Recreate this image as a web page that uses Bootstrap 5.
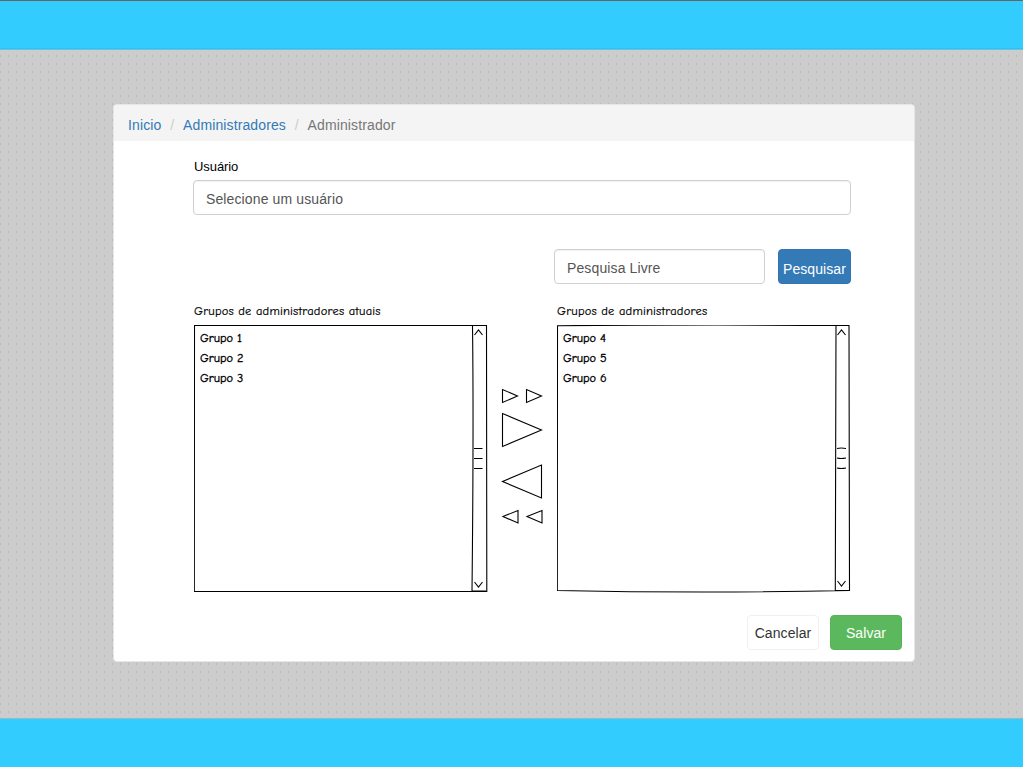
<!DOCTYPE html>
<html lang="pt-BR">
<head>
<meta charset="utf-8">
<meta name="viewport" content="width=device-width, initial-scale=1">
<title>Administrador</title>
<link href="https://cdn.jsdelivr.net/npm/bootstrap@5.3.0/dist/css/bootstrap.min.css" rel="stylesheet">
<style>
body{font-family:"Liberation Sans",Arial,sans-serif;font-size:14px;line-height:20px;color:#333;height:767px;overflow:hidden;background:#ccc}
.top-bar{height:50px;background:#3cf;border-top:1px solid #666;border-bottom:1px solid #6bc3e2;box-shadow:inset 0 -1px #2bc3f6}
.bottom-bar{height:49px;background:#3cf;border-top:1px solid #8bbdcd}
.dotted{background:#ccc url("data:image/svg+xml,%3Csvg xmlns='http://www.w3.org/2000/svg' width='8' height='8'%3E%3Cpath d='M0 5h1v2H0z' fill='%23bababa'/%3E%3C/svg%3E");padding:54px 0 0 113px}
.panel{width:802px;height:558px;border:1px solid #e6e6e6;border-radius:4px;overflow:hidden}
.trail{height:36px;background:#f4f4f4;padding:10px 0 0 14px;letter-spacing:.12px}
.trail .breadcrumb{--bs-breadcrumb-divider-color:#ccc;--bs-breadcrumb-item-active-color:#777;--bs-breadcrumb-item-padding-x:8.8px}
.trail a{color:#337ab7}
.content{padding:16px 12px 0 80px}
.field-label{font-size:13px;color:#000;line-height:19px;letter-spacing:-.08px}
.field{height:35px;border:1px solid #d0d0d0;border-radius:4px;padding:2px 12px 0;font-size:14px;color:#555;letter-spacing:.12px;box-shadow:inset 0 1px 1px rgba(0,0,0,.06)}
.field-user{width:658px;margin:4px 0 0 -1px}
.search-row{width:657px;margin-top:34px}
.field-search{width:211px}
.btn{font-size:14px;height:35px;border-radius:4px;padding:1px 0 0;letter-spacing:.08px;line-height:20px}
.btn-search{width:73px;background:#337ab7;border-color:#3075b1;padding-top:4px;margin-left:13px}
.btn-cancel{width:72px;border-color:#f0f0f0;color:#333;background:#fff}
.btn-save{width:72px;background:#5cb85c;border-color:#56b456}
.lists{margin-top:16px}
.hand{font-family:"Comic Sans MS","Comic Neue","Open Sans","Noto Sans",sans-serif;font-size:12px;color:#000}
.list-title{font-size:12.5px;line-height:22px;height:25px;white-space:nowrap;letter-spacing:.2px;-webkit-text-stroke:.2px #000}
.pick{width:294px;height:268px}
.pick svg{top:0;left:0}
.pick ul{padding:3px 0 0 6px}
.pick li{font-size:12.3px;line-height:20px;height:20px;-webkit-text-stroke:.35px #000}
.sketch{fill:none;stroke:#000;stroke-width:1.1}
.movers{width:69px;padding:86px 0 0 13px}
.actions{margin-top:22px;gap:11px}
</style>
</head>
<body class="d-flex flex-column">
<header class="top-bar flex-shrink-0"></header>
<main class="dotted flex-grow-1">
<section class="panel bg-white">
<nav class="trail"><ol class="breadcrumb mb-0">
<li class="breadcrumb-item"><a class="text-decoration-none" href="#">Inicio</a></li>
<li class="breadcrumb-item"><a class="text-decoration-none" href="#">Administradores</a></li>
<li class="breadcrumb-item active">Administrador</li></ol></nav>
<div class="content">
<div class="field-label">Usuário</div>
<div class="field field-user d-flex align-items-center">Selecione um usuário</div>
<div class="search-row d-flex justify-content-end align-items-start">
<div class="field field-search d-flex align-items-center">Pesquisa Livre</div>
<button class="btn btn-primary btn-search" type="button">Pesquisar</button>
</div>
<div class="lists d-flex hand">
<div><div class="list-title">Grupos de administradores atuais</div>
<div class="pick position-relative">
<svg class="position-absolute sketch" width="294" height="268"><path d="M.5.5H292.500L292.800 266.500.3 266.500ZM278.500 1Q279.800 100 278 266.500M280.500 10l4-5 4 5M280 123.500h8.500M280 133.500h8.500M280 143.500h8.500M280.500 257l4 5 4-5M278 266h14"/></svg>
<ul class="list-unstyled mb-0 position-relative"><li>Grupo 1</li><li>Grupo 2</li><li>Grupo 3</li></ul>
</div></div>
<div class="movers"><svg class="sketch" width="44" height="140" viewBox="0 0 44 140"><path d="M1.500 3.500v13l15-6.500zM25.500 3.500v13l15-6.500zM1.500 27.500v33l39-16.500zM40.500 79v33L1.500 95.500zM17 124.500v12.500l-15-6.500zM41 124.500v12.500l-15-6.500z"/></svg></div>
<div><div class="list-title">Grupos de administradores</div>
<div class="pick position-relative">
<svg class="position-absolute sketch" width="294" height="268"><path d="M.5.700Q147-.5 292 .5L292.500 265.500Q147 268.500.3 265.500ZM279 1L278.300 265.500M280.500 10l4-5 4 5M280 123.500q4-1 9 0M280 133q4 1 9 0M280 143q4 1 9 0M280.500 256l4 5 4-5M279 265.500h14"/></svg>
<ul class="list-unstyled mb-0 position-relative"><li>Grupo 4</li><li>Grupo 5</li><li>Grupo 6</li></ul>
</div></div>
</div>
<div class="actions d-flex justify-content-end">
<button class="btn btn-cancel" type="button">Cancelar</button>
<button class="btn btn-success btn-save" type="button">Salvar</button>
</div>
</div>
</section>
</main>
<footer class="bottom-bar flex-shrink-0"></footer>
<script src="https://cdn.jsdelivr.net/npm/bootstrap@5.3.0/dist/js/bootstrap.bundle.min.js"></script>
</body>
</html>
